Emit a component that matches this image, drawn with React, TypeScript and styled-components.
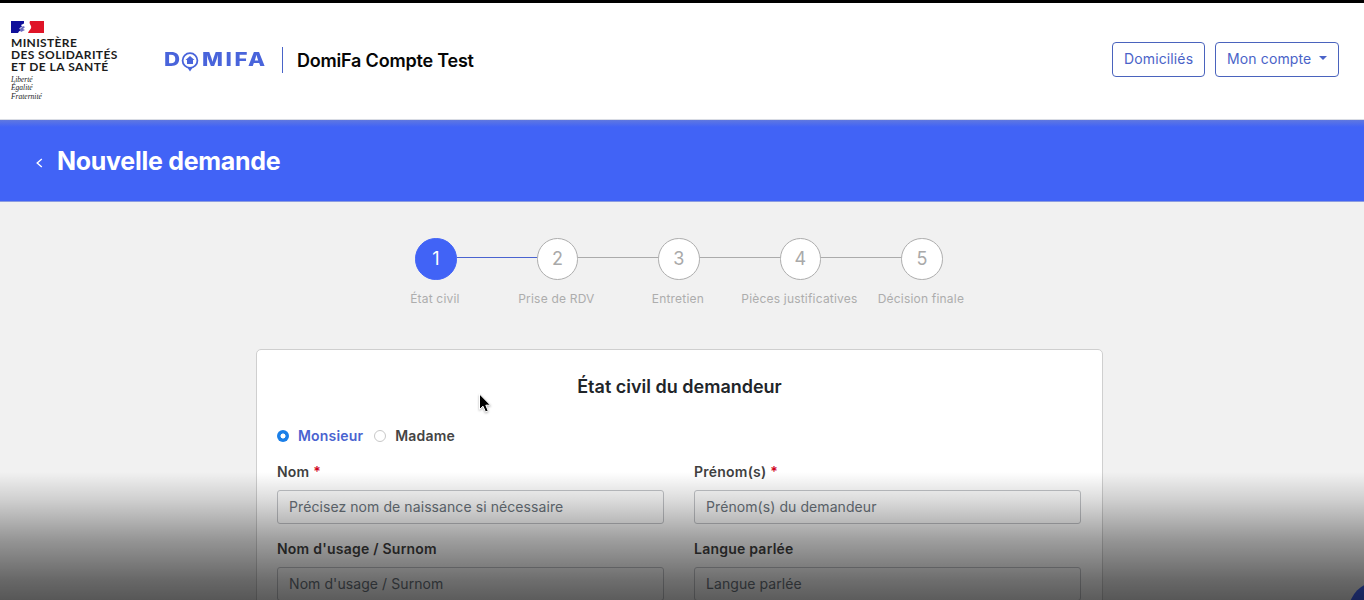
import React from "react";
import styled, { createGlobalStyle } from "styled-components";

const Global = createGlobalStyle`
  * { box-sizing: border-box; }
  html, body { margin: 0; height: 600px; overflow: hidden; }
  body { background: #f1f1f1; font-family: Inter, "Liberation Sans", sans-serif; color: #212529; }
`;

const Page = styled.div`
  position: relative;
  height: 600px;
  overflow: hidden;
  display: flex;
  flex-direction: column;
  border-top: 3px solid #000;
`;

const Header = styled.header`
  flex: none;
  height: 116px;
  padding: 0 25px 0 11px;
  display: flex;
  align-items: flex-start;
  background: #fff;
`;

const Ministry = styled.div`
  width: 153px;
  padding-top: 18px;
  display: flex;
  flex-direction: column;
  svg { display: block; }
`;

const MinistryName = styled.div`
  margin-top: 4px;
  font: 700 12px/12px Lato, sans-serif;
  color: #1c1c1c;
  white-space: nowrap;
`;

const NameLine = styled.div<{ $spacing: number }>`
  letter-spacing: ${(p) => p.$spacing}px;
`;

const Motto = styled.div`
  margin-top: 3px;
  font: italic 400 7.5px/8.3px "Liberation Serif", serif;
  color: #222;
`;

const Brand = styled.div`
  display: flex;
  align-items: center;
  height: 28px;
  margin-top: 43px;
`;

const Wordmark = styled.div`
  display: flex;
  align-items: center;
  width: 118px;
  color: #4964db;
  font: 800 19px/28px Inter, sans-serif;
  svg { margin: 4px 3px 0 0; flex: none; }
`;

const WideLetters = styled.span<{ $width: number }>`
  width: ${(p) => p.$width}px;
  letter-spacing: 2.2px;
  transform: scaleX(1.17);
  transform-origin: 0 50%;
  white-space: nowrap;
`;

const Structure = styled.div`
  height: 26px;
  padding-left: 14px;
  border-left: 1px solid #4964c8;
  font-size: 18px;
  line-height: 27px;
  font-weight: 600;
  letter-spacing: -0.2px;
  color: #060606;
  white-space: nowrap;
`;

const Actions = styled.nav`
  margin: 39px 0 0 auto;
  display: flex;
  gap: 10px;
`;

const NavButton = styled.button<{ $width: number }>`
  width: ${(p) => p.$width}px;
  height: 35px;
  padding: 0 0 1px 11px;
  display: flex;
  align-items: center;
  border: 1px solid #4a63bd;
  border-radius: 4px;
  background: #fff;
  color: #4a63c8;
  font: 400 14px/20px Inter, sans-serif;
  letter-spacing: 0.13px;
  white-space: nowrap;
`;

const Caret = styled.span`
  margin: -3px 0 0 8px;
  border: 4px solid transparent;
  border-top-color: currentColor;
  border-bottom: 0;
`;

const Banner = styled.div`
  flex: none;
  height: 83px;
  padding: 1px 0 0 35px;
  display: flex;
  align-items: center;
  border-top: 1px solid #d9dce4;
  border-bottom: 1px solid #8c9ce0;
  background: linear-gradient(#6078e0, #4163f6 7px);
  color: #fff;
  svg { margin-top: 1px; }
`;

const Title = styled.h1`
  margin: 0 0 0 13px;
  font-size: 25px;
  line-height: 32px;
  font-weight: 700;
  letter-spacing: -0.28px;
`;

const Steps = styled.ol`
  flex: none;
  align-self: center;
  list-style: none;
  display: flex;
  width: 607.5px;
  margin: 36px 6.2px 0 0;
  padding: 0;
`;

const StepItem = styled.li`
  flex: 1;
  display: flex;
  flex-direction: column;
  align-items: center;
`;

const StepTrack = styled.div`
  width: 100%;
  display: flex;
  align-items: center;
`;

const Line = styled.span<{ $tone: "none" | "active" | "idle" }>`
  flex: 1;
  height: 1px;
  margin-bottom: 2px;
  background: ${(p) => ({ none: "transparent", active: "#4a63d0", idle: "#ababab" })[p.$tone]};
`;

const Circle = styled.span<{ $active: boolean }>`
  width: 41.5px;
  height: 41.5px;
  display: flex;
  align-items: center;
  justify-content: center;
  border-radius: 50%;
  border: 1px solid ${(p) => (p.$active ? "#4163f6" : "#adadad")};
  background: ${(p) => (p.$active ? "#4163f6" : "#fff")};
  color: ${(p) => (p.$active ? "#fff" : "#a9a9a9")};
  font-size: 18px;
`;

const StepLabel = styled.span`
  margin: 11px 2px 0 0;
  font-size: 12px;
  line-height: 16px;
  letter-spacing: 0.2px;
  color: #adadad;
  white-space: nowrap;
`;

const Card = styled.main`
  flex: none;
  align-self: center;
  width: 847px;
  height: 300px;
  margin: 42px 5px 0 0;
  padding: 23px 20px 0;
  border: 1px solid #cfcfcf;
  border-radius: 5px;
  background: #fff;
`;

const CardTitle = styled.h2`
  margin: 0;
  text-align: center;
  font-size: 18px;
  line-height: 28px;
  font-weight: 600;
  color: #212529;
`;

const Radios = styled.div`
  display: flex;
  align-items: center;
  height: 20px;
  margin-top: 25px;
`;

const Radio = styled.span<{ $checked: boolean }>`
  width: 12px;
  height: 12px;
  border-radius: 50%;
  border: ${(p) => (p.$checked ? "0" : "1px solid #c8c8c8")};
  background: ${(p) => (p.$checked ? "radial-gradient(circle, #fff 2.1px, #1b7fe8 2.9px)" : "#fff")};
`;

const RadioLabel = styled.span<{ $checked: boolean }>`
  margin: 0 11px 0 9px;
  font-size: 14px;
  line-height: 20px;
  font-weight: 600;
  letter-spacing: 0.18px;
  color: ${(p) => (p.$checked ? "#4a63d0" : "#444")};
`;

const Fields = styled.div`
  display: grid;
  grid-template-columns: 387px 387px;
  column-gap: 30px;
  row-gap: 15px;
  margin-top: 16px;
`;

const Field = styled.label`
  display: flex;
  flex-direction: column;
  font-size: 14px;
  line-height: 20px;
  font-weight: 600;
  letter-spacing: 0.23px;
  color: #3f3f3f;
`;

const Required = styled.span`
  color: #d0021b;
`;

const Input = styled.input`
  width: 100%;
  height: 34px;
  margin-top: 8px;
  padding: 0 11px;
  border: 1px solid #c4c6ca;
  border-radius: 3px;
  background: transparent;
  font: 400 14px/20px Inter, sans-serif;
  letter-spacing: 0.08px;
  &::placeholder { color: #6c757d; opacity: 1; }
`;

const Shade = styled.div`
  position: absolute;
  inset: 469px 0 0;
  pointer-events: none;
  background: linear-gradient(rgba(0,0,0,0), rgba(0,0,0,0.14) 22%, rgba(0,0,0,0.38) 53%, rgba(0,0,0,0.57) 84%, rgba(0,0,0,0.64));
`;

const Chat = styled.div`
  position: absolute;
  left: 1349px;
  top: 579px;
  width: 56px;
  height: 56px;
  border-radius: 50%;
  background: #4163f6;
`;

const Pointer = styled.svg`
  position: absolute;
  left: 476px;
  top: 386px;
  filter: drop-shadow(0 1px 1px rgba(0, 0, 0, 0.3));
`;

const steps = ["État civil", "Prise de RDV", "Entretien", "Pièces justificatives", "Décision finale"];

const fields = [
  { label: "Nom", required: true, hint: "Précisez nom de naissance si nécessaire" },
  { label: "Prénom(s)", required: true, hint: "Prénom(s) du demandeur" },
  { label: "Nom d'usage / Surnom", required: false, hint: "Nom d'usage / Surnom" },
  { label: "Langue parlée", required: false, hint: "Langue parlée" },
];

const Flag = () => (
  <svg width="33" height="12" viewBox="0 0 33 12">
    <path d="M0 0H16V12H0Z" fill="#10109a" />
    <path d="M13 0H20C18.5 1.5 19.5 3 20 5C20.3 8 18 8 17 12H7C8 9.5 10 9.5 12 8.5L8 7.5L11 5.5L10 4L13 2.5Z" fill="#fff" />
    <path d="M8.5 8.5L12 5L14 6L12 8L14 9L10 11Z" fill="#6b6bc0" />
    <path d="M19 0H33V12H17C18 9 21 8 20 5C19 3 18 2 19 0Z" fill="#df1427" />
  </svg>
);

const Pin = () => (
  <svg width="18" height="20" viewBox="0 0 18 20" fill="none">
    <circle cx="9" cy="8.5" r="7.4" stroke="#4964db" strokeWidth="1.8" />
    <path d="M6 15H12L9 19.5Z" fill="#4964db" />
    <path d="M9 4L13.5 8H12V12H6V8H4.5Z" fill="#4964db" />
  </svg>
);

export default function App() {
  return (
    <Page>
      <Global />
      <Header>
        <Ministry>
          <Flag />
          <MinistryName>
            <NameLine $spacing={0.35}>MINISTÈRE</NameLine>
            <NameLine $spacing={0.4}>DES SOLIDARITÉS</NameLine>
            <NameLine $spacing={0.5}>ET DE LA SANTÉ</NameLine>
          </MinistryName>
          <Motto>
            Liberté
            <br />
            Égalité
            <br />
            Fraternité
          </Motto>
        </Ministry>
        <Brand>
          <Wordmark>
            <WideLetters $width={17}>D</WideLetters>
            <Pin />
            <WideLetters $width={66}>MIFA</WideLetters>
          </Wordmark>
          <Structure>DomiFa Compte Test</Structure>
        </Brand>
        <Actions>
          <NavButton $width={93}>Domiciliés</NavButton>
          <NavButton $width={124}>
            Mon compte
            <Caret />
          </NavButton>
        </Actions>
      </Header>
      <Banner>
        <svg width="9" height="12" viewBox="0 0 9 12" fill="none" stroke="#fff" strokeWidth="1.4">
          <path d="M6.8 3L2.2 7L6.8 11" />
        </svg>
        <Title>Nouvelle demande</Title>
      </Banner>
      <Steps>
        {steps.map((name, i) => (
          <StepItem key={name}>
            <StepTrack>
              <Line $tone={i === 0 ? "none" : i === 1 ? "active" : "idle"} />
              <Circle $active={i === 0}>{i + 1}</Circle>
              <Line $tone={i === 4 ? "none" : i === 0 ? "active" : "idle"} />
            </StepTrack>
            <StepLabel>{name}</StepLabel>
          </StepItem>
        ))}
      </Steps>
      <Card>
        <CardTitle>État civil du demandeur</CardTitle>
        <Radios>
          <Radio $checked />
          <RadioLabel $checked>Monsieur</RadioLabel>
          <Radio $checked={false} />
          <RadioLabel $checked={false}>Madame</RadioLabel>
        </Radios>
        <Fields>
          {fields.map((f) => (
            <Field key={f.label}>
              <span>
                {f.label} {f.required && <Required>*</Required>}
              </span>
              <Input placeholder={f.hint} />
            </Field>
          ))}
        </Fields>
      </Card>
      <Chat />
      <Shade />
      <Pointer width="18" height="26" viewBox="0 0 18 26">
        <path
          d="M3.5 5V20.5L7 17.2L9.5 23L12.2 21.8L9.8 16.2H14.5Z"
          fill="#000"
          stroke="#fff"
          strokeWidth="1"
        />
      </Pointer>
    </Page>
  );
}
